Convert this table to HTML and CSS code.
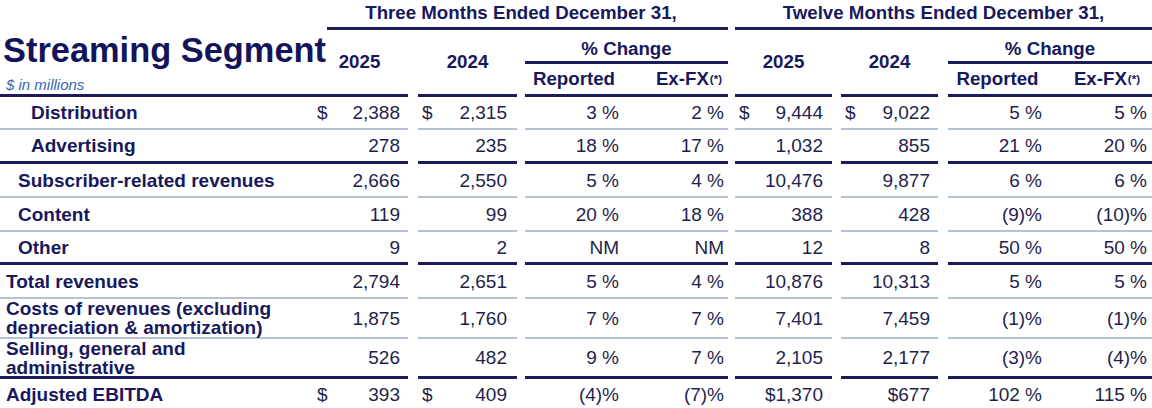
FILE: index.html
```html
<!DOCTYPE html>
<html lang="en">
<head>
<meta charset="utf-8">
<title>Streaming Segment</title>
<link rel="stylesheet" href="styles.css">
</head>
<body>
<div class="tbl">
  <div class="hd title-cell">
    <div class="title">Streaming Segment</div>
    <div class="sub">$ in millions</div>
  </div>
  <div class="hd g3">Three Months Ended December 31,</div>
  <div class="hd g12">Twelve Months Ended December 31,</div>
  <div class="hd y y1">2025</div>
  <div class="hd y y2">2024</div>
  <div class="hd pc pc3">% Change</div>
  <div class="hd y y3">2025</div>
  <div class="hd y y4">2024</div>
  <div class="hd pc pc12">% Change</div>
  <div class="hd rp rp3">Reported</div>
  <div class="hd ex ex3">Ex-FX<sup>(*)</sup></div>
  <div class="hd rp rp12">Reported</div>
  <div class="hd ex ex12">Ex-FX<sup>(*)</sup></div>

  <div class="row lt">
    <div class="lbl i2">Distribution</div>
    <div class="v"><span class="cur">$</span><span>2,388</span></div>
    <div class="v"><span class="cur">$</span><span>2,315</span></div>
    <div class="v">3 %</div>
    <div class="v">2 %</div>
    <div class="v"><span class="cur">$</span><span>9,444</span></div>
    <div class="v"><span class="cur">$</span><span>9,022</span></div>
    <div class="v">5 %</div>
    <div class="v">5 %</div>
  </div>
  <div class="row dk">
    <div class="lbl i2">Advertising</div>
    <div class="v">278</div>
    <div class="v">235</div>
    <div class="v">18 %</div>
    <div class="v">17 %</div>
    <div class="v">1,032</div>
    <div class="v">855</div>
    <div class="v">21 %</div>
    <div class="v">20 %</div>
  </div>
  <div class="row lt">
    <div class="lbl i1">Subscriber-related revenues</div>
    <div class="v">2,666</div>
    <div class="v">2,550</div>
    <div class="v">5 %</div>
    <div class="v">4 %</div>
    <div class="v">10,476</div>
    <div class="v">9,877</div>
    <div class="v">6 %</div>
    <div class="v">6 %</div>
  </div>
  <div class="row lt">
    <div class="lbl i1">Content</div>
    <div class="v">119</div>
    <div class="v">99</div>
    <div class="v">20 %</div>
    <div class="v">18 %</div>
    <div class="v">388</div>
    <div class="v">428</div>
    <div class="v">(9)%</div>
    <div class="v">(10)%</div>
  </div>
  <div class="row dk">
    <div class="lbl i1">Other</div>
    <div class="v">9</div>
    <div class="v">2</div>
    <div class="v">NM</div>
    <div class="v">NM</div>
    <div class="v">12</div>
    <div class="v">8</div>
    <div class="v">50 %</div>
    <div class="v">50 %</div>
  </div>
  <div class="row lt">
    <div class="lbl">Total revenues</div>
    <div class="v">2,794</div>
    <div class="v">2,651</div>
    <div class="v">5 %</div>
    <div class="v">4 %</div>
    <div class="v">10,876</div>
    <div class="v">10,313</div>
    <div class="v">5 %</div>
    <div class="v">5 %</div>
  </div>
  <div class="row lt">
    <div class="lbl">Costs of revenues (excluding<br>depreciation &amp; amortization)</div>
    <div class="v">1,875</div>
    <div class="v">1,760</div>
    <div class="v">7 %</div>
    <div class="v">7 %</div>
    <div class="v">7,401</div>
    <div class="v">7,459</div>
    <div class="v">(1)%</div>
    <div class="v">(1)%</div>
  </div>
  <div class="row dk">
    <div class="lbl">Selling, general and<br>administrative</div>
    <div class="v">526</div>
    <div class="v">482</div>
    <div class="v">9 %</div>
    <div class="v">7 %</div>
    <div class="v">2,105</div>
    <div class="v">2,177</div>
    <div class="v">(3)%</div>
    <div class="v">(4)%</div>
  </div>
  <div class="row last">
    <div class="lbl">Adjusted EBITDA</div>
    <div class="v"><span class="cur">$</span><span>393</span></div>
    <div class="v"><span class="cur">$</span><span>409</span></div>
    <div class="v">(4)%</div>
    <div class="v">(7)%</div>
    <div class="v">$1,370</div>
    <div class="v">$677</div>
    <div class="v">102 %</div>
    <div class="v">115 %</div>
  </div>
</div>
</body>
</html>
```

FILE: styles.css
```css
* { box-sizing: border-box; }
html, body { margin: 0; padding: 0; background: #ffffff; }
body {
  font-family: "Liberation Sans", Arial, sans-serif;
  color: #1f1f4c;
  overflow: hidden;
}

.tbl {
  display: grid;
  width: 1152px;
  grid-template-columns: 311px 97px 109px 109px 102px 104px 106px 112px 102px;
  grid-template-rows: 30px 34px 33px 33px 34px 34px 34px 33px 34px 40px 40px 30px;
}

/* ---------- header ---------- */
.hd {
  display: flex;
  align-items: center;
  justify-content: center;
  font-weight: bold;
  font-size: 18.7px;
  line-height: 1;
  color: #18185c;
  border-bottom: 3px solid #1c1c5c;
  white-space: nowrap;
}
.title-cell {
  grid-column: 1;
  grid-row: 1 / 4;
  display: block;
  padding: 33px 0 0 3px;
}
.title {
  font-size: 34.4px;
  line-height: 34px;
  color: #14145a;
}
.sub {
  margin-top: 10px;
  padding-left: 3px;
  font-size: 15px;
  line-height: 15px;
  font-weight: normal;
  font-style: italic;
  color: #3566b0;
}
.g3 { grid-column: 2 / 6; grid-row: 1; margin-left: 16px; padding-right: 13px; }
.g12 { grid-column: 6 / 10; grid-row: 1; margin-left: 7px; }
.y { grid-row: 2 / 4; }
.y1 { grid-column: 2; }
.y2 { grid-column: 3; margin-left: 10px; }
.y3 { grid-column: 6; margin-left: 7px; }
.y4 { grid-column: 7; margin-left: 9px; }
.pc { grid-row: 2; align-items: flex-end; padding-bottom: 2px; }
.pc3 { grid-column: 4 / 6; margin-left: 8px; }
.pc12 { grid-column: 8 / 10; margin-left: 10px; }
.rp, .ex { grid-row: 3; padding-top: 1px; }
.rp { padding-right: 3px; }
.rp3 { grid-column: 4; margin-left: 8px; }
.rp12 { grid-column: 8; margin-left: 10px; }
.ex { justify-content: flex-end; }
.ex3 { grid-column: 5; padding-right: 6px; }
.ex12 { grid-column: 9; padding-right: 12px; }
.ex sup {
  font-size: 11.5px;
  line-height: 1;
  vertical-align: 6px;
  margin-left: 1px;
}

/* ---------- body rows ---------- */
.row { display: contents; }
.row > div {
  display: flex;
  align-items: center;
  font-size: 19px;
  line-height: 19px;
  border-bottom: 2px solid #b5c3d5;
  white-space: nowrap;
}
.row.dk > div { border-bottom: 3px solid #1c1c5c; }
.row.last > div { border-bottom: 0; }

.row > :nth-child(3) { margin-left: 10px; }
.row > :nth-child(4) { margin-left: 8px; }
.row > :nth-child(6) { margin-left: 7px; }
.row > :nth-child(7) { margin-left: 9px; }
.row > :nth-child(8) { margin-left: 10px; }

.lbl {
  font-weight: bold;
  color: #18185c;
  padding-left: 6px;
}
.lbl.i1 { padding-left: 18px; }
.lbl.i2 { padding-left: 31px; }

.v { justify-content: flex-end; padding-left: 4px; }
.row > :nth-child(2) { padding-right: 8px; padding-left: 6px; }
.row > :nth-child(3) { padding-right: 10px; }
.row > :nth-child(4) { padding-right: 7px; }
.row > :nth-child(5) { padding-right: 4px; }
.row > :nth-child(6) { padding-right: 9px; }
.row > :nth-child(7) { padding-right: 8px; }
.row > :nth-child(8) { padding-right: 8px; }
.row > :nth-child(9) { padding-right: 5px; }

.cur { margin-right: auto; }
```
